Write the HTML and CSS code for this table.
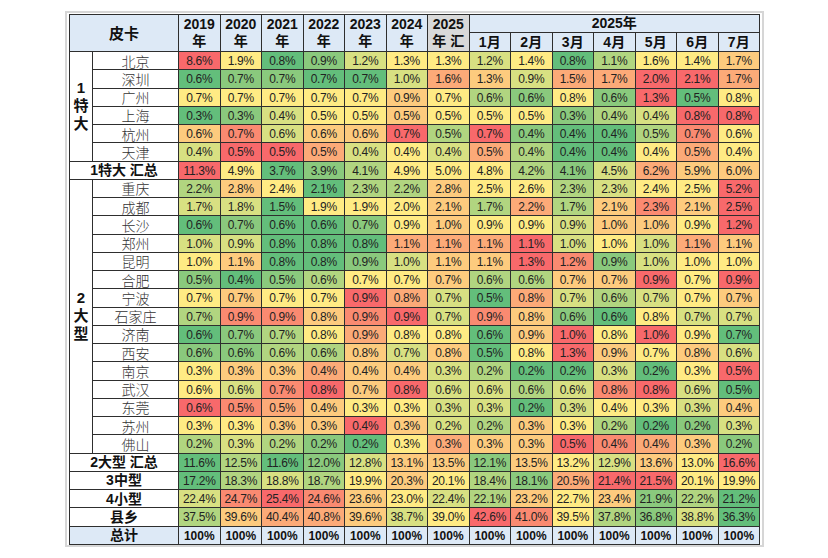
FILE: index.html
```html
<!DOCTYPE html>
<html lang="zh-CN">
<head>
<meta charset="utf-8">
<title>皮卡 城市销量占比</title>
<link rel="stylesheet" href="styles.css">
</head>
<body>
<div class="frame">
<table class="sheet">
<colgroup>
<col class="c-grp"><col class="c-city">
<col class="c-num"><col class="c-num"><col class="c-num"><col class="c-num"><col class="c-num"><col class="c-num"><col class="c-num">
<col class="c-num"><col class="c-num"><col class="c-num"><col class="c-num"><col class="c-num"><col class="c-num"><col class="c-num">
</colgroup>
<thead>
<tr class="hd-top">
<th colspan="2" rowspan="2" class="corner">皮卡</th>
<th rowspan="2">2019<br>年</th>
<th rowspan="2">2020<br>年</th>
<th rowspan="2">2021<br>年</th>
<th rowspan="2">2022<br>年</th>
<th rowspan="2">2023<br>年</th>
<th rowspan="2">2024<br>年</th>
<th rowspan="2" class="sum">2025<br>年 汇</th>
<th colspan="7" class="year">2025年</th>
</tr>
<tr class="hd-mon">
<th>1月</th><th>2月</th><th>3月</th><th>4月</th><th>5月</th><th>6月</th><th>7月</th>
</tr>
</thead>
<tbody>
<tr><th rowspan="6" class="grp">1<br>特<br>大</th><th class="city">北京</th><td class="lv9">8.6%</td><td class="lv5">1.9%</td><td class="lv1">0.8%</td><td class="lv2">0.9%</td><td class="lv4">1.2%</td><td class="lv5">1.3%</td><td class="lv5">1.3%</td><td class="lv4">1.2%</td><td class="lv5">1.4%</td><td class="lv1">0.8%</td><td class="lv3">1.1%</td><td class="lv5">1.6%</td><td class="lv5">1.4%</td><td class="lv6">1.7%</td></tr>
<tr><th class="city">深圳</th><td class="lv1">0.6%</td><td class="lv2">0.7%</td><td class="lv2">0.7%</td><td class="lv1">0.7%</td><td class="lv1">0.7%</td><td class="lv4">1.0%</td><td class="lv7">1.6%</td><td class="lv6">1.3%</td><td class="lv4">0.9%</td><td class="lv7">1.5%</td><td class="lv7">1.7%</td><td class="lv9">2.0%</td><td class="lv9">2.1%</td><td class="lv7">1.7%</td></tr>
<tr><th class="city">广州</th><td class="lv5">0.7%</td><td class="lv5">0.7%</td><td class="lv5">0.7%</td><td class="lv5">0.7%</td><td class="lv5">0.7%</td><td class="lv6">0.9%</td><td class="lv5">0.7%</td><td class="lv3">0.6%</td><td class="lv2">0.6%</td><td class="lv5">0.8%</td><td class="lv2">0.6%</td><td class="lv9">1.3%</td><td class="lv1">0.5%</td><td class="lv5">0.8%</td></tr>
<tr><th class="city">上海</th><td class="lv1">0.3%</td><td class="lv2">0.3%</td><td class="lv4">0.4%</td><td class="lv5">0.5%</td><td class="lv5">0.5%</td><td class="lv6">0.5%</td><td class="lv5">0.5%</td><td class="lv5">0.5%</td><td class="lv5">0.5%</td><td class="lv2">0.3%</td><td class="lv3">0.4%</td><td class="lv4">0.4%</td><td class="lv9">0.8%</td><td class="lv9">0.8%</td></tr>
<tr><th class="city">杭州</th><td class="lv6">0.6%</td><td class="lv8">0.7%</td><td class="lv4">0.6%</td><td class="lv6">0.6%</td><td class="lv6">0.6%</td><td class="lv9">0.7%</td><td class="lv3">0.5%</td><td class="lv9">0.7%</td><td class="lv2">0.4%</td><td class="lv1">0.4%</td><td class="lv1">0.4%</td><td class="lv3">0.5%</td><td class="lv8">0.7%</td><td class="lv5">0.6%</td></tr>
<tr class="grp-end"><th class="city">天津</th><td class="lv4">0.4%</td><td class="lv9">0.5%</td><td class="lv9">0.5%</td><td class="lv7">0.5%</td><td class="lv4">0.4%</td><td class="lv5">0.4%</td><td class="lv4">0.4%</td><td class="lv7">0.5%</td><td class="lv3">0.4%</td><td class="lv1">0.4%</td><td class="lv1">0.4%</td><td class="lv5">0.4%</td><td class="lv7">0.5%</td><td class="lv5">0.4%</td></tr>
<tr class="subtotal"><th colspan="2" class="sub">1特大 汇总</th><td class="lv9">11.3%</td><td class="lv5">4.9%</td><td class="lv1">3.7%</td><td class="lv2">3.9%</td><td class="lv3">4.1%</td><td class="lv5">4.9%</td><td class="lv5">5.0%</td><td class="lv5">4.8%</td><td class="lv3">4.2%</td><td class="lv2">4.1%</td><td class="lv4">4.5%</td><td class="lv7">6.2%</td><td class="lv6">5.9%</td><td class="lv6">6.0%</td></tr>
<tr><th rowspan="15" class="grp">2<br>大<br>型</th><th class="city">重庆</th><td class="lv3">2.2%</td><td class="lv6">2.8%</td><td class="lv5">2.4%</td><td class="lv1">2.1%</td><td class="lv3">2.3%</td><td class="lv3">2.2%</td><td class="lv6">2.8%</td><td class="lv5">2.5%</td><td class="lv5">2.6%</td><td class="lv3">2.3%</td><td class="lv4">2.3%</td><td class="lv5">2.4%</td><td class="lv5">2.5%</td><td class="lv9">5.2%</td></tr>
<tr><th class="city">成都</th><td class="lv4">1.7%</td><td class="lv4">1.8%</td><td class="lv1">1.5%</td><td class="lv5">1.9%</td><td class="lv5">1.9%</td><td class="lv5">2.0%</td><td class="lv6">2.1%</td><td class="lv3">1.7%</td><td class="lv7">2.2%</td><td class="lv3">1.7%</td><td class="lv6">2.1%</td><td class="lv8">2.3%</td><td class="lv6">2.1%</td><td class="lv9">2.5%</td></tr>
<tr><th class="city">长沙</th><td class="lv1">0.6%</td><td class="lv2">0.7%</td><td class="lv1">0.6%</td><td class="lv1">0.6%</td><td class="lv2">0.7%</td><td class="lv5">0.9%</td><td class="lv6">1.0%</td><td class="lv5">0.9%</td><td class="lv5">0.9%</td><td class="lv4">0.9%</td><td class="lv6">1.0%</td><td class="lv6">1.0%</td><td class="lv5">0.9%</td><td class="lv9">1.2%</td></tr>
<tr><th class="city">郑州</th><td class="lv4">1.0%</td><td class="lv4">0.9%</td><td class="lv1">0.8%</td><td class="lv1">0.8%</td><td class="lv1">0.8%</td><td class="lv7">1.1%</td><td class="lv7">1.1%</td><td class="lv7">1.1%</td><td class="lv9">1.1%</td><td class="lv4">1.0%</td><td class="lv5">1.0%</td><td class="lv4">1.0%</td><td class="lv7">1.1%</td><td class="lv6">1.1%</td></tr>
<tr><th class="city">昆明</th><td class="lv5">1.0%</td><td class="lv6">1.1%</td><td class="lv1">0.8%</td><td class="lv1">0.8%</td><td class="lv2">0.9%</td><td class="lv4">1.0%</td><td class="lv6">1.1%</td><td class="lv6">1.1%</td><td class="lv9">1.3%</td><td class="lv8">1.2%</td><td class="lv2">0.9%</td><td class="lv4">1.0%</td><td class="lv5">1.0%</td><td class="lv5">1.0%</td></tr>
<tr><th class="city">合肥</th><td class="lv2">0.5%</td><td class="lv1">0.4%</td><td class="lv2">0.5%</td><td class="lv3">0.6%</td><td class="lv5">0.7%</td><td class="lv5">0.7%</td><td class="lv6">0.7%</td><td class="lv3">0.6%</td><td class="lv3">0.6%</td><td class="lv6">0.7%</td><td class="lv6">0.7%</td><td class="lv9">0.9%</td><td class="lv5">0.7%</td><td class="lv9">0.9%</td></tr>
<tr><th class="city">宁波</th><td class="lv5">0.7%</td><td class="lv6">0.7%</td><td class="lv5">0.7%</td><td class="lv5">0.7%</td><td class="lv9">0.9%</td><td class="lv7">0.8%</td><td class="lv4">0.7%</td><td class="lv1">0.5%</td><td class="lv7">0.8%</td><td class="lv4">0.7%</td><td class="lv3">0.6%</td><td class="lv4">0.7%</td><td class="lv5">0.7%</td><td class="lv6">0.7%</td></tr>
<tr><th class="city">石家庄</th><td class="lv3">0.7%</td><td class="lv8">0.9%</td><td class="lv8">0.9%</td><td class="lv6">0.8%</td><td class="lv8">0.9%</td><td class="lv9">0.9%</td><td class="lv4">0.7%</td><td class="lv8">0.9%</td><td class="lv6">0.8%</td><td class="lv2">0.6%</td><td class="lv1">0.6%</td><td class="lv5">0.8%</td><td class="lv4">0.7%</td><td class="lv4">0.7%</td></tr>
<tr><th class="city">济南</th><td class="lv1">0.6%</td><td class="lv2">0.7%</td><td class="lv3">0.7%</td><td class="lv5">0.8%</td><td class="lv7">0.9%</td><td class="lv5">0.8%</td><td class="lv5">0.8%</td><td class="lv1">0.6%</td><td class="lv6">0.9%</td><td class="lv9">1.0%</td><td class="lv5">0.8%</td><td class="lv9">1.0%</td><td class="lv5">0.9%</td><td class="lv1">0.7%</td></tr>
<tr><th class="city">西安</th><td class="lv2">0.6%</td><td class="lv2">0.6%</td><td class="lv3">0.6%</td><td class="lv3">0.6%</td><td class="lv6">0.8%</td><td class="lv4">0.7%</td><td class="lv6">0.8%</td><td class="lv1">0.5%</td><td class="lv5">0.8%</td><td class="lv9">1.3%</td><td class="lv6">0.9%</td><td class="lv5">0.7%</td><td class="lv6">0.8%</td><td class="lv4">0.6%</td></tr>
<tr><th class="city">南京</th><td class="lv5">0.3%</td><td class="lv6">0.3%</td><td class="lv6">0.3%</td><td class="lv7">0.4%</td><td class="lv6">0.4%</td><td class="lv6">0.4%</td><td class="lv4">0.3%</td><td class="lv3">0.2%</td><td class="lv1">0.2%</td><td class="lv1">0.2%</td><td class="lv4">0.3%</td><td class="lv1">0.2%</td><td class="lv5">0.3%</td><td class="lv9">0.5%</td></tr>
<tr><th class="city">武汉</th><td class="lv5">0.6%</td><td class="lv4">0.6%</td><td class="lv8">0.7%</td><td class="lv9">0.8%</td><td class="lv6">0.7%</td><td class="lv9">0.8%</td><td class="lv4">0.6%</td><td class="lv4">0.6%</td><td class="lv3">0.6%</td><td class="lv4">0.6%</td><td class="lv8">0.8%</td><td class="lv9">0.8%</td><td class="lv4">0.6%</td><td class="lv1">0.5%</td></tr>
<tr><th class="city">东莞</th><td class="lv9">0.6%</td><td class="lv8">0.5%</td><td class="lv7">0.5%</td><td class="lv6">0.4%</td><td class="lv5">0.3%</td><td class="lv5">0.3%</td><td class="lv4">0.3%</td><td class="lv4">0.3%</td><td class="lv1">0.2%</td><td class="lv4">0.3%</td><td class="lv5">0.4%</td><td class="lv5">0.3%</td><td class="lv4">0.3%</td><td class="lv6">0.4%</td></tr>
<tr><th class="city">苏州</th><td class="lv5">0.3%</td><td class="lv5">0.3%</td><td class="lv6">0.3%</td><td class="lv6">0.3%</td><td class="lv9">0.4%</td><td class="lv6">0.3%</td><td class="lv4">0.2%</td><td class="lv3">0.2%</td><td class="lv6">0.3%</td><td class="lv5">0.3%</td><td class="lv3">0.2%</td><td class="lv1">0.2%</td><td class="lv2">0.2%</td><td class="lv4">0.3%</td></tr>
<tr class="grp-end"><th class="city">佛山</th><td class="lv3">0.2%</td><td class="lv4">0.3%</td><td class="lv3">0.2%</td><td class="lv2">0.2%</td><td class="lv1">0.2%</td><td class="lv5">0.3%</td><td class="lv7">0.3%</td><td class="lv6">0.3%</td><td class="lv6">0.3%</td><td class="lv9">0.5%</td><td class="lv8">0.4%</td><td class="lv7">0.4%</td><td class="lv6">0.3%</td><td class="lv2">0.2%</td></tr>
<tr class="subtotal"><th colspan="2" class="sub">2大型 汇总</th><td class="lv1">11.6%</td><td class="lv3">12.5%</td><td class="lv1">11.6%</td><td class="lv2">12.0%</td><td class="lv4">12.8%</td><td class="lv6">13.1%</td><td class="lv6">13.5%</td><td class="lv2">12.1%</td><td class="lv6">13.5%</td><td class="lv5">13.2%</td><td class="lv4">12.9%</td><td class="lv6">13.6%</td><td class="lv5">13.0%</td><td class="lv9">16.6%</td></tr>
<tr class="subtotal"><th colspan="2" class="sub">3中型</th><td class="lv1">17.2%</td><td class="lv3">18.3%</td><td class="lv4">18.8%</td><td class="lv3">18.7%</td><td class="lv5">19.9%</td><td class="lv6">20.3%</td><td class="lv5">20.1%</td><td class="lv3">18.4%</td><td class="lv2">18.1%</td><td class="lv7">20.5%</td><td class="lv9">21.4%</td><td class="lv9">21.5%</td><td class="lv5">20.1%</td><td class="lv5">19.9%</td></tr>
<tr class="subtotal"><th colspan="2" class="sub">4小型</th><td class="lv4">22.4%</td><td class="lv8">24.7%</td><td class="lv9">25.4%</td><td class="lv8">24.6%</td><td class="lv6">23.6%</td><td class="lv5">23.0%</td><td class="lv4">22.4%</td><td class="lv3">22.1%</td><td class="lv6">23.2%</td><td class="lv5">22.7%</td><td class="lv6">23.4%</td><td class="lv2">21.9%</td><td class="lv3">22.2%</td><td class="lv1">21.2%</td></tr>
<tr class="subtotal"><th colspan="2" class="sub">县乡</th><td class="lv3">37.5%</td><td class="lv6">39.6%</td><td class="lv7">40.4%</td><td class="lv7">40.8%</td><td class="lv6">39.6%</td><td class="lv4">38.7%</td><td class="lv5">39.0%</td><td class="lv9">42.6%</td><td class="lv8">41.0%</td><td class="lv5">39.5%</td><td class="lv3">37.8%</td><td class="lv2">36.8%</td><td class="lv4">38.8%</td><td class="lv1">36.3%</td></tr>
<tr class="grand"><th colspan="2" class="sub">总计</th><td>100%</td><td>100%</td><td>100%</td><td>100%</td><td>100%</td><td>100%</td><td>100%</td><td>100%</td><td>100%</td><td>100%</td><td>100%</td><td>100%</td><td>100%</td><td>100%</td></tr>
</tbody>
</table>
</div>
</body>
</html>
```

FILE: styles.css
```css
html, body {
  margin: 0;
  padding: 0;
  background: #ffffff;
}

body {
  width: 828px;
  height: 558px;
  overflow: hidden;
}

.frame {
  box-sizing: border-box;
  margin: 11px 0 0 65px;
  width: 699px;
  height: 536px;
  border: 2px solid #d6d6d6;
  padding: 1px 0 0 2px;
  background: #ffffff;
}

.sheet {
  border-collapse: collapse;
  table-layout: fixed;
  width: 690px;
  font-family: "Liberation Sans", "Noto Sans CJK SC", Arial, sans-serif;
  font-size: 12px;
  color: #222222;
}

.c-grp { width: 23px; }
.c-city { width: 86px; }
.c-num { width: 41.5px; }

.sheet th,
.sheet td {
  padding: 0;
  border: 1px solid #2e2e2e;
  text-align: center;
  vertical-align: middle;
  white-space: nowrap;
  overflow: hidden;
}

.sheet thead th {
  background: #dde9f6;
  font-weight: bold;
  font-size: 14px;
  line-height: 17px;
  color: #111111;
}

.sheet thead th.sum {
  background: #d9d9d9;
}

.sheet thead th.corner {
  font-size: 15px;
}

.hd-top { height: 17px; }
.hd-mon { height: 19px; }

.sheet tbody tr { height: 18.25px; }

.sheet td {
  line-height: 16px;
  letter-spacing: -0.3px;
  padding-top: 1px;
}

.grp {
  background: #ffffff;
  font-weight: bold;
  font-size: 15px;
  line-height: 18px;
  color: #111111;
  border-right-color: #a8a8a8;
}

.city {
  background: #ffffff;
  font-family: "Noto Sans CJK SC", sans-serif;
  font-weight: 300;
  font-size: 14px;
  line-height: 16px;
  color: #333333;
  border-left-color: #a8a8a8;
}

.sub {
  background: #ffffff;
  font-weight: bold;
  font-size: 14px;
  line-height: 16px;
  color: #111111;
}

.grand th,
.grand td {
  background: #dde9f6;
  font-weight: bold;
  color: #111111;
  letter-spacing: 0;
}

/* 3-colour heat scale: green (low) → yellow (median) → red (high) */
.lv1 { background: #63be7b; }
.lv2 { background: #8ac97d; }
.lv3 { background: #b1d580; }
.lv4 { background: #d8e082; }
.lv5 { background: #ffeb84; }
.lv6 { background: #fdcb7e; }
.lv7 { background: #fcaa78; }
.lv8 { background: #fa8a71; }
.lv9 { background: #f8696b; }
```
